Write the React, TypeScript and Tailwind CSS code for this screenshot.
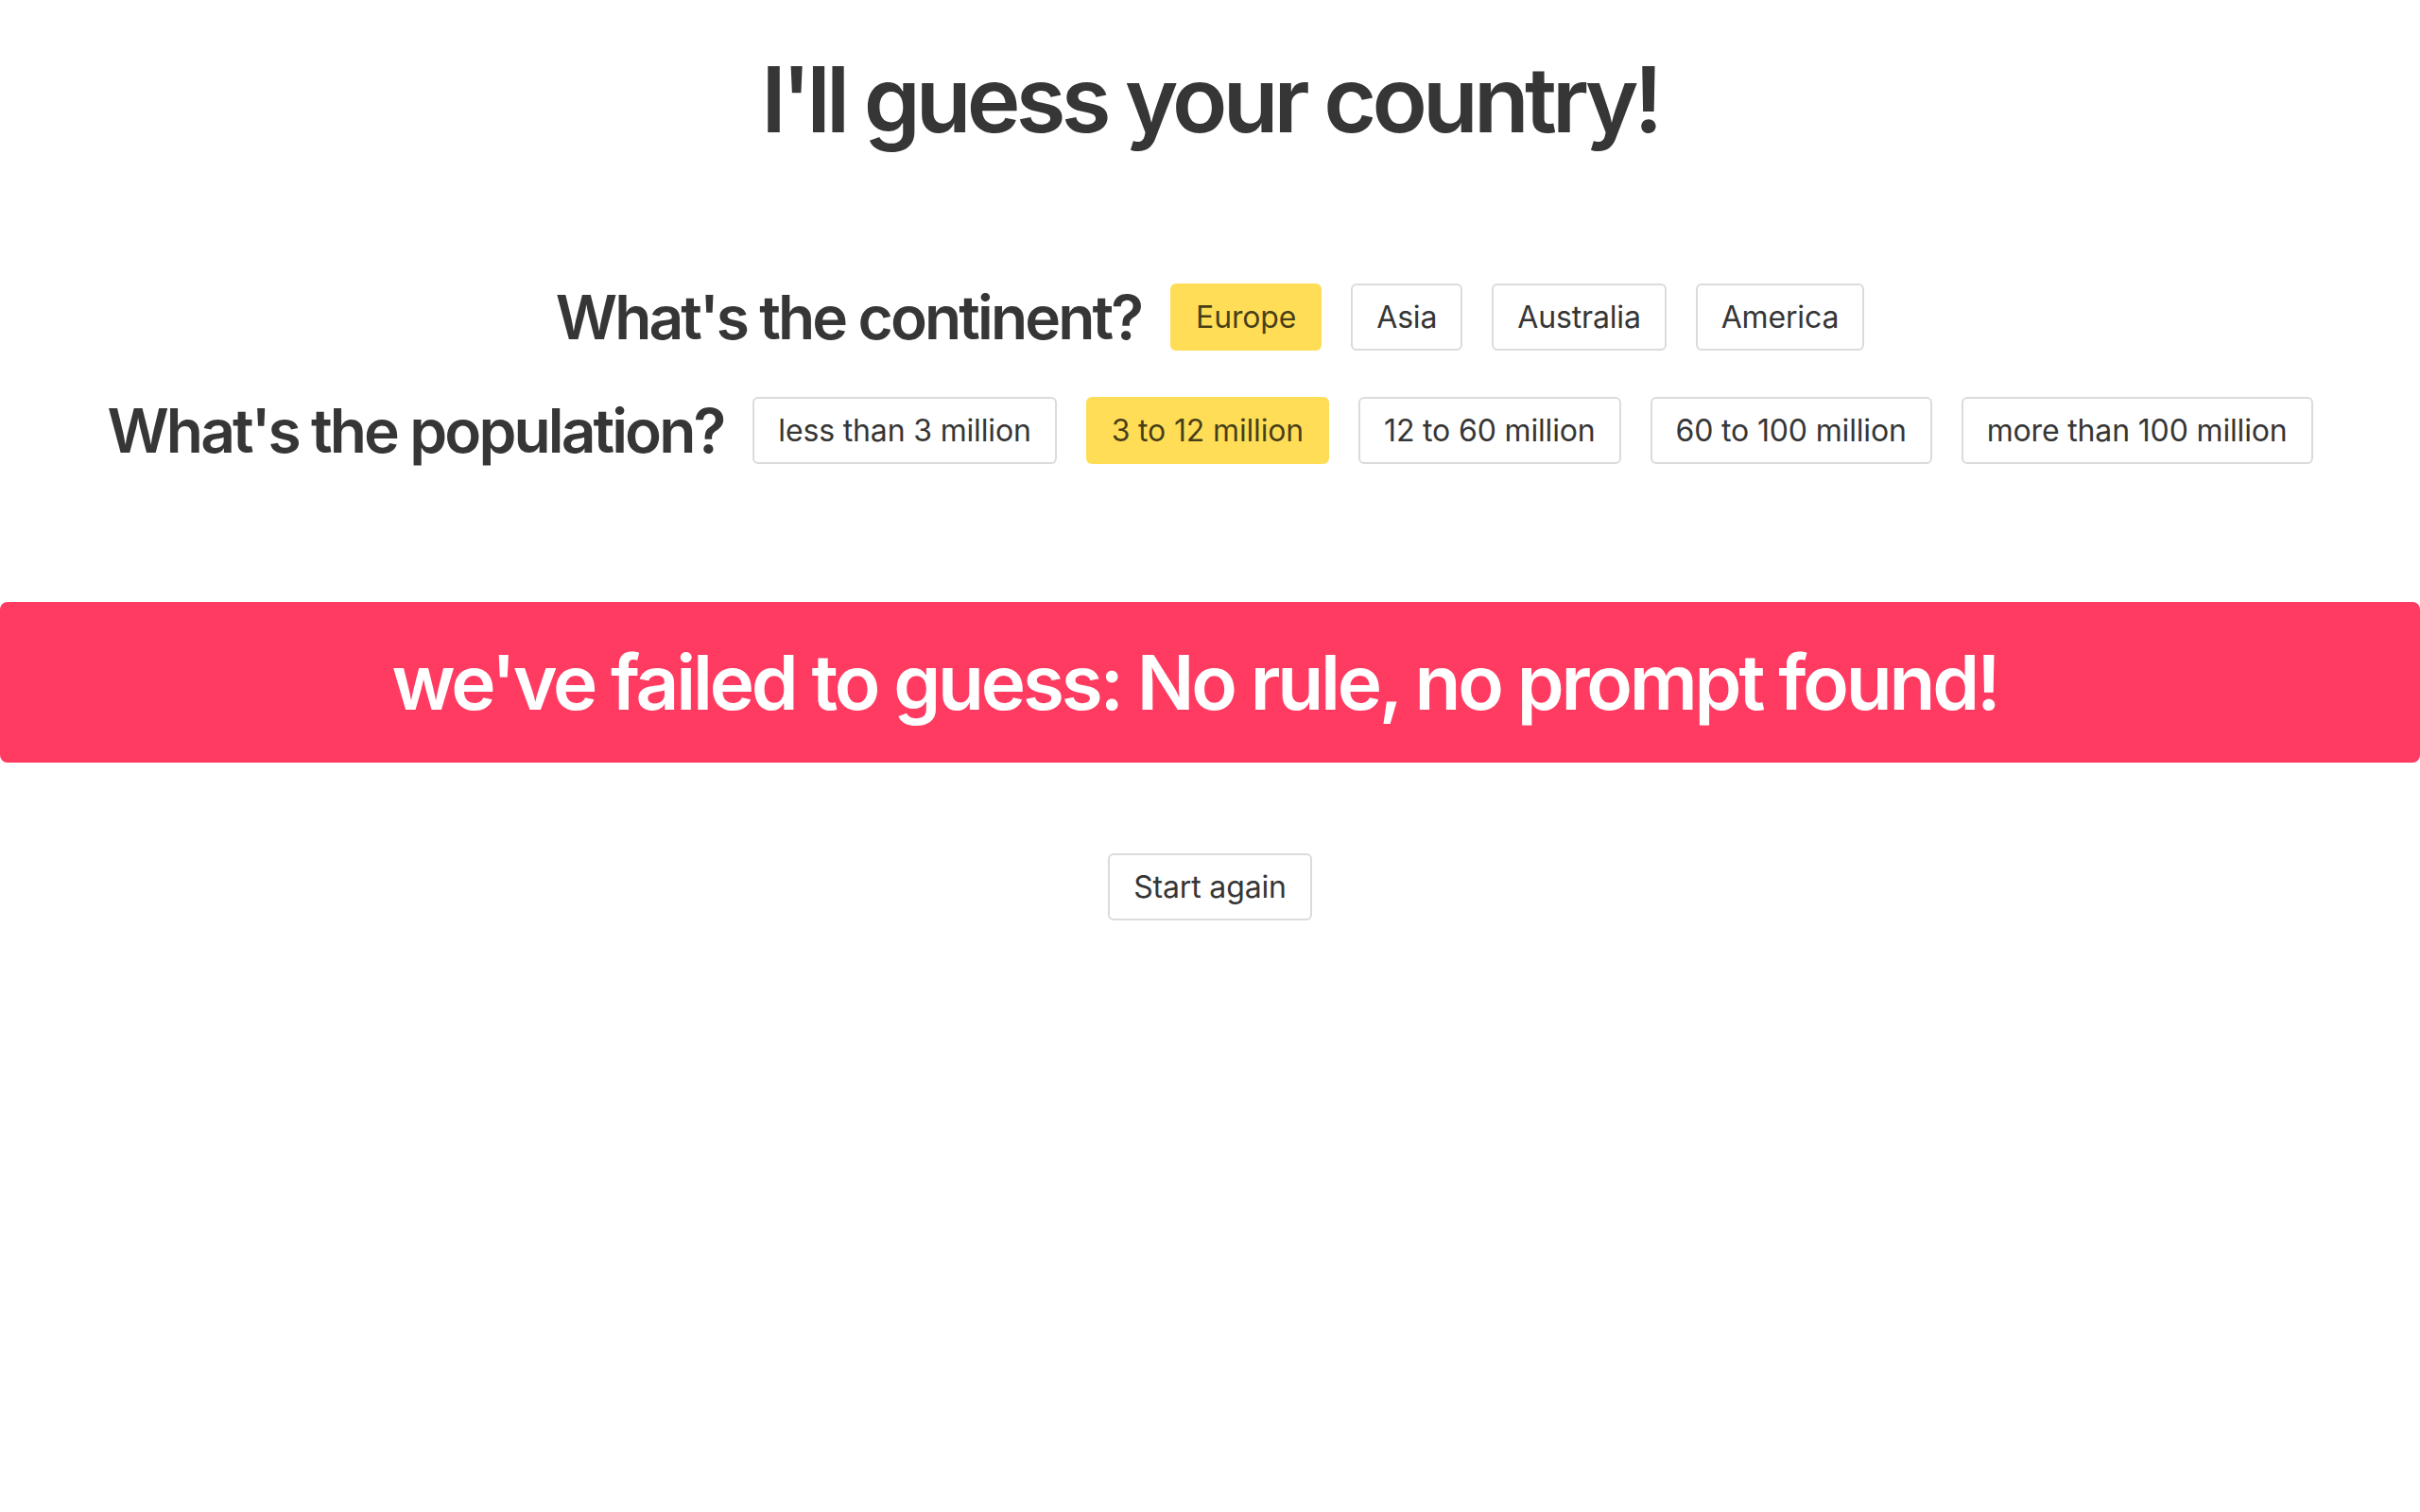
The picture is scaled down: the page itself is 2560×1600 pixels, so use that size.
const continents = ["Europe", "Asia", "Australia", "America"];
const populations = [
  "less than 3 million",
  "3 to 12 million",
  "12 to 60 million",
  "60 to 100 million",
  "more than 100 million",
];

function Choice({ label, active }: { label: string; active?: boolean }) {
  return (
    <button
      className={`h-[71px] px-[25px] rounded-[6px] border-2 text-[32px] leading-none tracking-[-0.005em] whitespace-nowrap ${
        active
          ? "bg-[#ffdd57] border-transparent text-[rgba(0,0,0,0.72)]"
          : "bg-white border-[#dbdbdb] text-[#363636]"
      }`}
    >
      {label}
    </button>
  );
}

function Question({
  title,
  options,
  selected,
}: {
  title: string;
  options: string[];
  selected: string;
}) {
  return (
    <div className="flex items-center justify-center gap-[31px]">
      <h3 className="text-[64px] font-semibold leading-none tracking-[-0.045em]">{title}</h3>
      {options.map((o) => (
        <Choice key={o} label={o} active={o === selected} />
      ))}
    </div>
  );
}

export default function App() {
  return (
    <div className="min-h-screen w-full bg-white font-['Inter',sans-serif] text-[#363636]">
      {/* Title */}
      <h1 className="pt-[51px] text-center text-[96px] font-semibold leading-[1.125] tracking-[-0.05em]">
        I'll guess your country!
      </h1>

      {/* Questions */}
      <div className="mt-[141px] flex flex-col gap-[49px]">
        <Question title="What's the continent?" options={continents} selected="Europe" />
        <Question title="What's the population?" options={populations} selected="3 to 12 million" />
      </div>

      {/* Result */}
      <div className="mt-[146px] h-[170px] pr-[32px] rounded-[8px] bg-[#ff3b62] flex items-center justify-center">
        <p className="text-white text-[80px] font-semibold leading-none tracking-[-0.04em]">
          we've failed to guess: No rule, no prompt found!
        </p>
      </div>

      <div className="mt-[96px] flex justify-center">
        <Choice label="Start again" />
      </div>
    </div>
  );
}
